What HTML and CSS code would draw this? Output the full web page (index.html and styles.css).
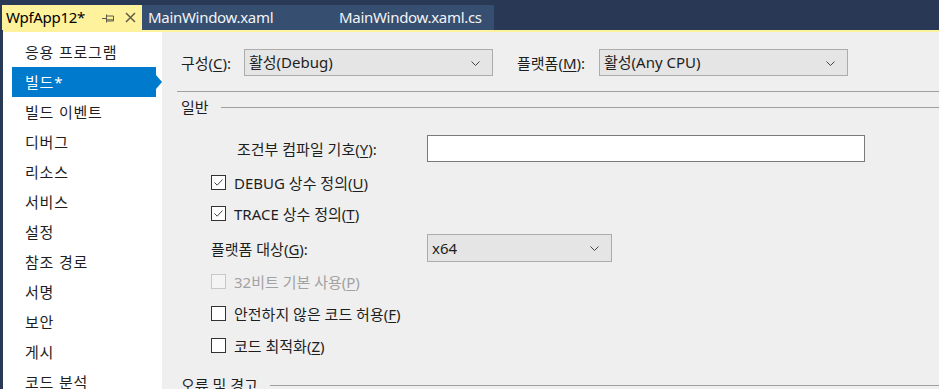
FILE: index.html
```html
<!DOCTYPE html>
<html lang="ko">
<head>
    <meta charset="UTF-8">
    <title>WpfApp12 - 빌드</title>
    <link rel="stylesheet" href="styles.css">
</head>
<body>
    <div class="tabs">
        <div class="tab active">
            <span class="tab-title">WpfApp12*</span>
            <svg class="pin" width="12" height="10" viewBox="0 0 12 10">
                <path d="M0 5.5H4M4.5 1.5V9.5M4.5 3H11.5V8H4.5M4.5 6.8H11.5" fill="none" stroke="#5f5c48" stroke-width="1"/>
            </svg>
            <svg class="close" width="11" height="11" viewBox="0 0 11 11">
                <path d="M1 1L10 10M10 1L1 10" stroke="#5f5c48" stroke-width="1.5"/>
            </svg>
        </div>
        <div class="tab doc first">MainWindow.xaml</div>
        <div class="tab doc">MainWindow.xaml.cs</div>
    </div>

    <div class="frame">
        <ul class="nav">
            <li>응용 프로그램</li>
            <li class="selected">빌드*</li>
            <li>빌드 이벤트</li>
            <li>디버그</li>
            <li>리소스</li>
            <li>서비스</li>
            <li>설정</li>
            <li>참조 경로</li>
            <li>서명</li>
            <li>보안</li>
            <li>게시</li>
            <li>코드 분석</li>
        </ul>

        <div class="page">
            <div class="config-row">
                <span class="cfg-label">구성(<u>C</u>):</span>
                <div class="select cfg">활성(Debug)
                    <svg class="chev" width="9" height="5" viewBox="0 0 9 5"><path d="M0.5 0.5L4.5 4.5L8.5 0.5" fill="none" stroke="#444" stroke-width="1"/></svg>
                </div>
                <span class="cfg-label platform">플랫폼(<u>M</u>):</span>
                <div class="select cfg">활성(Any CPU)
                    <svg class="chev" width="9" height="5" viewBox="0 0 9 5"><path d="M0.5 0.5L4.5 4.5L8.5 0.5" fill="none" stroke="#444" stroke-width="1"/></svg>
                </div>
            </div>

            <div class="rule"></div>

            <div class="section-head">일반</div>

            <div class="general">
                <div class="field-row symbols">
                    <span class="field-label indent">조건부 컴파일 기호(<u>Y</u>):</span>
                    <div class="textbox"></div>
                </div>

                <div class="check-row debug">
                    <span class="box checked"><svg width="13" height="13" viewBox="0 0 13 13"><path d="M2.5 6.5L5.2 9.2L10.5 3.5" fill="none" stroke="#444" stroke-width="1"/></svg></span>
                    <span>DEBUG 상수 정의(<u>U</u>)</span>
                </div>
                <div class="check-row">
                    <span class="box checked"><svg width="13" height="13" viewBox="0 0 13 13"><path d="M2.5 6.5L5.2 9.2L10.5 3.5" fill="none" stroke="#444" stroke-width="1"/></svg></span>
                    <span>TRACE 상수 정의(<u>T</u>)</span>
                </div>

                <div class="field-row target">
                    <span class="field-label">플랫폼 대상(<u>G</u>):</span>
                    <div class="select small">x64
                        <svg class="chev" width="9" height="5" viewBox="0 0 9 5"><path d="M0.5 0.5L4.5 4.5L8.5 0.5" fill="none" stroke="#444" stroke-width="1"/></svg>
                    </div>
                </div>

                <div class="check-row tall disabled">
                    <span class="box"></span>
                    <span>32비트 기본 사용(<u>P</u>)</span>
                </div>
                <div class="check-row tall">
                    <span class="box"></span>
                    <span>안전하지 않은 코드 허용(<u>F</u>)</span>
                </div>
                <div class="check-row tall">
                    <span class="box"></span>
                    <span>코드 최적화(<u>Z</u>)</span>
                </div>
            </div>

            <div class="section-head errors">오류 및 경고</div>
        </div>
    </div>
</body>
</html>
```

FILE: styles.css
```css
* {
    margin: 0;
    padding: 0;
    box-sizing: border-box;
}

body {
    width: 939px;
    height: 389px;
    overflow: hidden;
    background: #293955;
    font-family: 'Noto Sans', 'Noto Sans CJK KR', sans-serif;
    font-size: 15px;
    color: #1e1e1e;
}

u {
    text-decoration: underline;
    text-underline-offset: 2px;
}

/* document tabs */
.tabs {
    height: 30px;
    padding-left: 2px;
    display: flex;
    align-items: flex-end;
}

.tab {
    height: 25px;
    display: flex;
    align-items: center;
    padding-left: 6px;
    line-height: 25px;
    white-space: nowrap;
    letter-spacing: -0.3px;
}

.tab.active {
    width: 140px;
    background: #fff29d;
    padding-left: 4px;
    color: #000;
}

.tab-title {
    width: 93px;
}

.pin {
    margin-left: 3px;
}

.close {
    margin-left: 11px;
}

.tab.doc {
    background: #364e6f;
    color: #f2f4f8;
    width: 161px;
}

.tab.doc.first {
    width: 191px;
}

/* main frame */
.frame {
    margin-left: 3px;
    height: 359px;
    border-top: 2px solid #fff29d;
    display: flex;
    background: #efefef;
}

.nav {
    list-style: none;
    width: 159px;
    flex-shrink: 0;
    background: #fff;
    padding: 5px 0 0 9px;
}

.nav li {
    position: relative;
    width: 144px;
    height: 30px;
    line-height: 30px;
    padding-left: 13px;
    letter-spacing: 0.8px;
}

.nav li.selected {
    background: #007acc;
    color: #fff;
}

.nav li.selected::after {
    content: '';
    position: absolute;
    right: -6px;
    top: 8px;
    border-left: 6px solid #007acc;
    border-top: 7px solid transparent;
    border-bottom: 7px solid transparent;
}

.page {
    flex: 1;
    padding: 17px 0 0 15px;
}

.config-row {
    display: flex;
    align-items: center;
    padding-left: 4px;
    height: 27px;
}

.cfg-label {
    width: 63px;
}

.cfg-label.platform {
    width: 82px;
    margin-left: 24px;
}

.select {
    position: relative;
    height: 27px;
    line-height: 25px;
    background: #e5e5e5;
    border: 1px solid #acacac;
    padding-left: 4px;
}

.select.cfg {
    width: 249px;
}

.select.small {
    width: 185px;
    height: 28px;
    line-height: 26px;
}

.chev {
    position: absolute;
    right: 12px;
    top: 11px;
}

.rule {
    height: 1px;
    background: #a0a0a0;
    margin-top: 15px;
}

.section-head {
    display: flex;
    align-items: center;
    height: 20px;
    margin-top: 5px;
    padding-left: 4px;
    line-height: 20px;
}

.section-head::after {
    content: '';
    flex: 1;
    height: 1px;
    background: #a0a0a0;
    margin-left: 12px;
}

.section-head.errors {
    margin-top: 14px;
}

.general {
    padding-left: 34px;
}

.field-row {
    display: flex;
    align-items: center;
}

.field-row.symbols {
    margin-top: 18px;
    height: 27px;
}

.field-row.target {
    margin-top: 5px;
    height: 28px;
}

.field-label {
    width: 216px;
}

.field-label.indent {
    padding-left: 26px;
}

.textbox {
    width: 438px;
    height: 27px;
    background: #fff;
    border: 1px solid #7a7a7a;
}

.check-row {
    display: flex;
    align-items: center;
    height: 31px;
}

.check-row.debug {
    margin-top: 5px;
}

.check-row.tall {
    height: 32px;
}

.field-row.target + .check-row {
    margin-top: 3px;
}

.box {
    width: 15px;
    height: 15px;
    border: 1px solid #333;
    background: #fff;
    margin-right: 8px;
    display: flex;
    align-items: center;
    justify-content: center;
}

.check-row.disabled {
    color: #a2a2a2;
}

.check-row.disabled .box {
    border-color: #c8c8c8;
    background: #f4f4f4;
}
```
